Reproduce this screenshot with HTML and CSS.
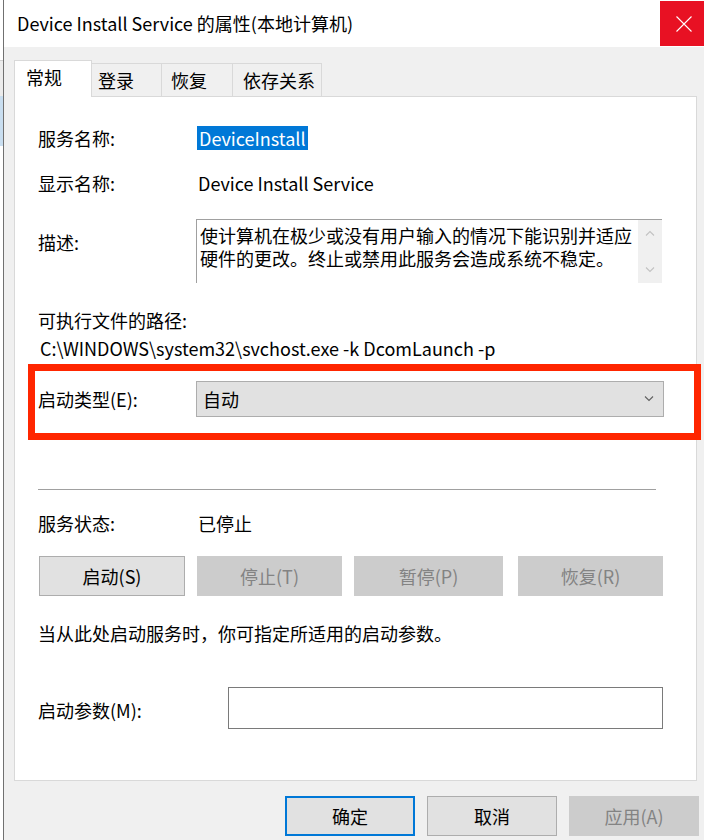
FILE: index.html
```html
<!DOCTYPE html>
<html lang="zh-CN">
<head>
<meta charset="utf-8">
<title>Device Install Service 的属性(本地计算机)</title>
<link rel="stylesheet" href="styles.css">
</head>
<body>
<div class="screen">
  <div class="behind"></div>
  <div class="window">
    <div class="titlebar">
      <div class="title">Device Install Service 的属性(本地计算机)</div>
      <div class="close">
        <svg width="16" height="16" viewBox="0 0 16 16"><path d="M0.5 0.5L15.5 15.5M15.5 0.5L0.5 15.5" stroke="#fff" stroke-width="1.1" fill="none"/></svg>
      </div>
    </div>
    <div class="client">
      <div class="tabs">
        <div class="tab active t1">常规</div>
        <div class="tab t2">登录</div>
        <div class="tab t3">恢复</div>
        <div class="tab t4">依存关系</div>
      </div>
      <div class="panel">
        <div class="row r-name">
          <div class="label">服务名称:</div>
          <div class="value"><span class="sel">DeviceInstall</span></div>
        </div>
        <div class="row r-display">
          <div class="label">显示名称:</div>
          <div class="value text">Device Install Service</div>
        </div>
        <div class="row r-desc">
          <div class="label desc-label">描述:</div>
          <div class="descbox">
            <div class="desctext">使计算机在极少或没有用户输入的情况下能识别并适应<br>硬件的更改。终止或禁用此服务会造成系统不稳定。</div>
            <div class="vscroll">
              <div class="arrow"><svg width="10" height="6" viewBox="0 0 10 6"><path d="M1 5.5L5 1.5L9 5.5" stroke="#c2c2c2" stroke-width="1.1" fill="none"/></svg></div>
              <div class="arrow"><svg width="10" height="6" viewBox="0 0 10 6"><path d="M1 0.5L5 4.5L9 0.5" stroke="#c2c2c2" stroke-width="1.1" fill="none"/></svg></div>
            </div>
          </div>
        </div>
        <div class="line path-label">可执行文件的路径:</div>
        <div class="line path">C:\WINDOWS\system32\svchost.exe -k DcomLaunch -p</div>
        <div class="row r-startup">
          <div class="label tall">启动类型(E):</div>
          <div class="combo">
            <span>自动</span>
            <svg width="10" height="6" viewBox="0 0 10 6"><path d="M1 0.5L5 4.5L9 0.5" stroke="#606060" stroke-width="1.1" fill="none"/></svg>
          </div>
        </div>
        <div class="separator"></div>
        <div class="row r-status">
          <div class="label">服务状态:</div>
          <div class="value text">已停止</div>
        </div>
        <div class="svc-buttons">
          <div class="btn svc b-start">启动(S)</div>
          <div class="btn svc disabled b-stop">停止(T)</div>
          <div class="btn svc disabled b-pause">暂停(P)</div>
          <div class="btn svc disabled b-resume">恢复(R)</div>
        </div>
        <div class="line note">当从此处启动服务时，你可指定所适用的启动参数。</div>
        <div class="row r-param">
          <div class="label param-label">启动参数(M):</div>
          <div class="input"></div>
        </div>
      </div>
      <div class="footer">
        <div class="btn dlg default">确定</div>
        <div class="btn dlg">取消</div>
        <div class="btn dlg disabled">应用(A)</div>
      </div>
    </div>
  </div>
  <div class="annotation"></div>
</div>
</body>
</html>
```
FILE: styles.css
```css
* { box-sizing: border-box; }
html, body { margin: 0; padding: 0; }
body {
  width: 704px;
  height: 840px;
  overflow: hidden;
  background: #fff;
  font-family: "Noto Sans CJK SC", "Noto Sans", sans-serif;
  font-size: 18px;
  color: #000;
}
.screen {
  position: relative;
  display: flex;
  width: 704px;
  height: 840px;
}
.behind {
  width: 3px;
  flex: none;
  background: linear-gradient(to bottom, #fff 0 60px, #d0d0d0 60px 61px, #ececec 61px 96px, #c9def0 96px 146px, #fff 146px);
}
.window {
  flex: 1;
  border-left: 1px solid #707070;
  background: #f0f0f0;
  display: flex;
  flex-direction: column;
  min-width: 0;
}
.titlebar {
  height: 47px;
  flex: none;
  background: #fff;
  display: flex;
  align-items: flex-start;
}
.title {
  padding-left: 13px;
  line-height: 47px;
  white-space: nowrap;
}
.close {
  margin-left: auto;
  margin-top: 1px;
  width: 44px;
  height: 45px;
  background: #e81123;
  display: flex;
  align-items: center;
  justify-content: center;
  padding-left: 4px;
}
.client {
  padding-left: 10px;
}
.tabs {
  display: flex;
  align-items: flex-end;
  height: 36px;
  margin-top: 13px;
  position: relative;
  z-index: 1;
}
.tab {
  height: 33px;
  border-top: 1px solid #d9d9d9;
  border-right: 1px solid #d9d9d9;
  line-height: 32px;
  white-space: nowrap;
  background: #f0f0f0;
}
.tab.active {
  height: 37px;
  margin-bottom: -1px;
  background: #fff;
  border-left: 1px solid #d9d9d9;
}
.t1 { width: 78px; padding-left: 11px; }
.t2 { width: 70px; padding-left: 6px; }
.t3 { width: 71px; padding-left: 9px; }
.t4 { width: 89px; padding-left: 10px; }

.panel {
  width: 683px;
  height: 685px;
  border: 1px solid #d9d9d9;
  background: #fff;
  padding-left: 23px;
}
.row {
  display: flex;
  align-items: flex-start;
}
.label {
  width: 158px;
  flex: none;
  line-height: 24px;
  white-space: nowrap;
}
.value {
  line-height: 24px;
  white-space: nowrap;
}
.value.text { padding-left: 2px; }
.sel {
  display: inline-block;
  margin-left: 1px;
  padding: 0 2px;
  background: #0078d7;
  color: #fff;
  line-height: 24px;
}
.r-name { margin-top: 29px; }
.r-display { margin-top: 21px; }
.r-desc { margin-top: 24px; }
.desc-label { padding-top: 11px; }
.descbox {
  width: 466px;
  height: 64px;
  border-top: 1px solid #a0a0a0;
  border-left: 1px solid #a0a0a0;
  display: flex;
}
.desctext {
  flex: 1;
  padding: 4px 0 0 3px;
  line-height: 23px;
  white-space: nowrap;
  overflow: hidden;
}
.vscroll {
  width: 24px;
  flex: none;
  background: #f0f0f0;
  display: flex;
  flex-direction: column;
  justify-content: space-between;
}
.arrow {
  height: 26px;
  display: flex;
  align-items: center;
  justify-content: center;
}
.line {
  line-height: 24px;
  white-space: nowrap;
}
.path-label { margin-top: 25px; }
.path { margin-top: 4px; padding-left: 2px; }
.r-startup { margin-top: 21px; }
.label.tall { line-height: 36px; }
.combo {
  width: 468px;
  height: 36px;
  border: 1px solid #adadad;
  background: #e1e1e1;
  display: flex;
  align-items: center;
  justify-content: space-between;
  padding: 0 9px 0 6px;
  line-height: 34px;
}
.separator {
  margin-top: 72px;
  width: 618px;
  height: 1px;
  background: #a0a0a0;
}
.r-status { margin-top: 21px; }
.svc-buttons {
  display: flex;
  margin-top: 21px;
  padding-left: 1px;
}
.btn {
  height: 40px;
  border: 1px solid #adadad;
  background: #e1e1e1;
  text-align: center;
  line-height: 38px;
  white-space: nowrap;
}
.btn.disabled {
  background: #cccccc;
  border-color: #cccccc;
  color: #838383;
}
.b-start { width: 146px; }
.b-stop { width: 145px; margin-left: 12px; }
.b-pause { width: 149px; margin-left: 12px; }
.b-resume { width: 145px; margin-left: 15px; }
.note { margin-top: 25px; }
.r-param { margin-top: 42px; }
.param-label { width: 190px; line-height: 42px; padding-top: 2px; }
.input {
  width: 435px;
  height: 42px;
  border: 1px solid #7a7a7a;
  background: #fff;
}
.footer {
  display: flex;
  justify-content: flex-end;
  gap: 12px;
  margin-top: 15px;
  padding-right: 5px;
}
.btn.dlg { width: 130px; }
.btn.default {
  border-color: #0078d7;
  box-shadow: inset 0 0 0 1px #0078d7;
}
.annotation {
  position: absolute;
  left: 28px;
  top: 364px;
  width: 673px;
  height: 76px;
  border: 7px solid #ff2600;
}
```
